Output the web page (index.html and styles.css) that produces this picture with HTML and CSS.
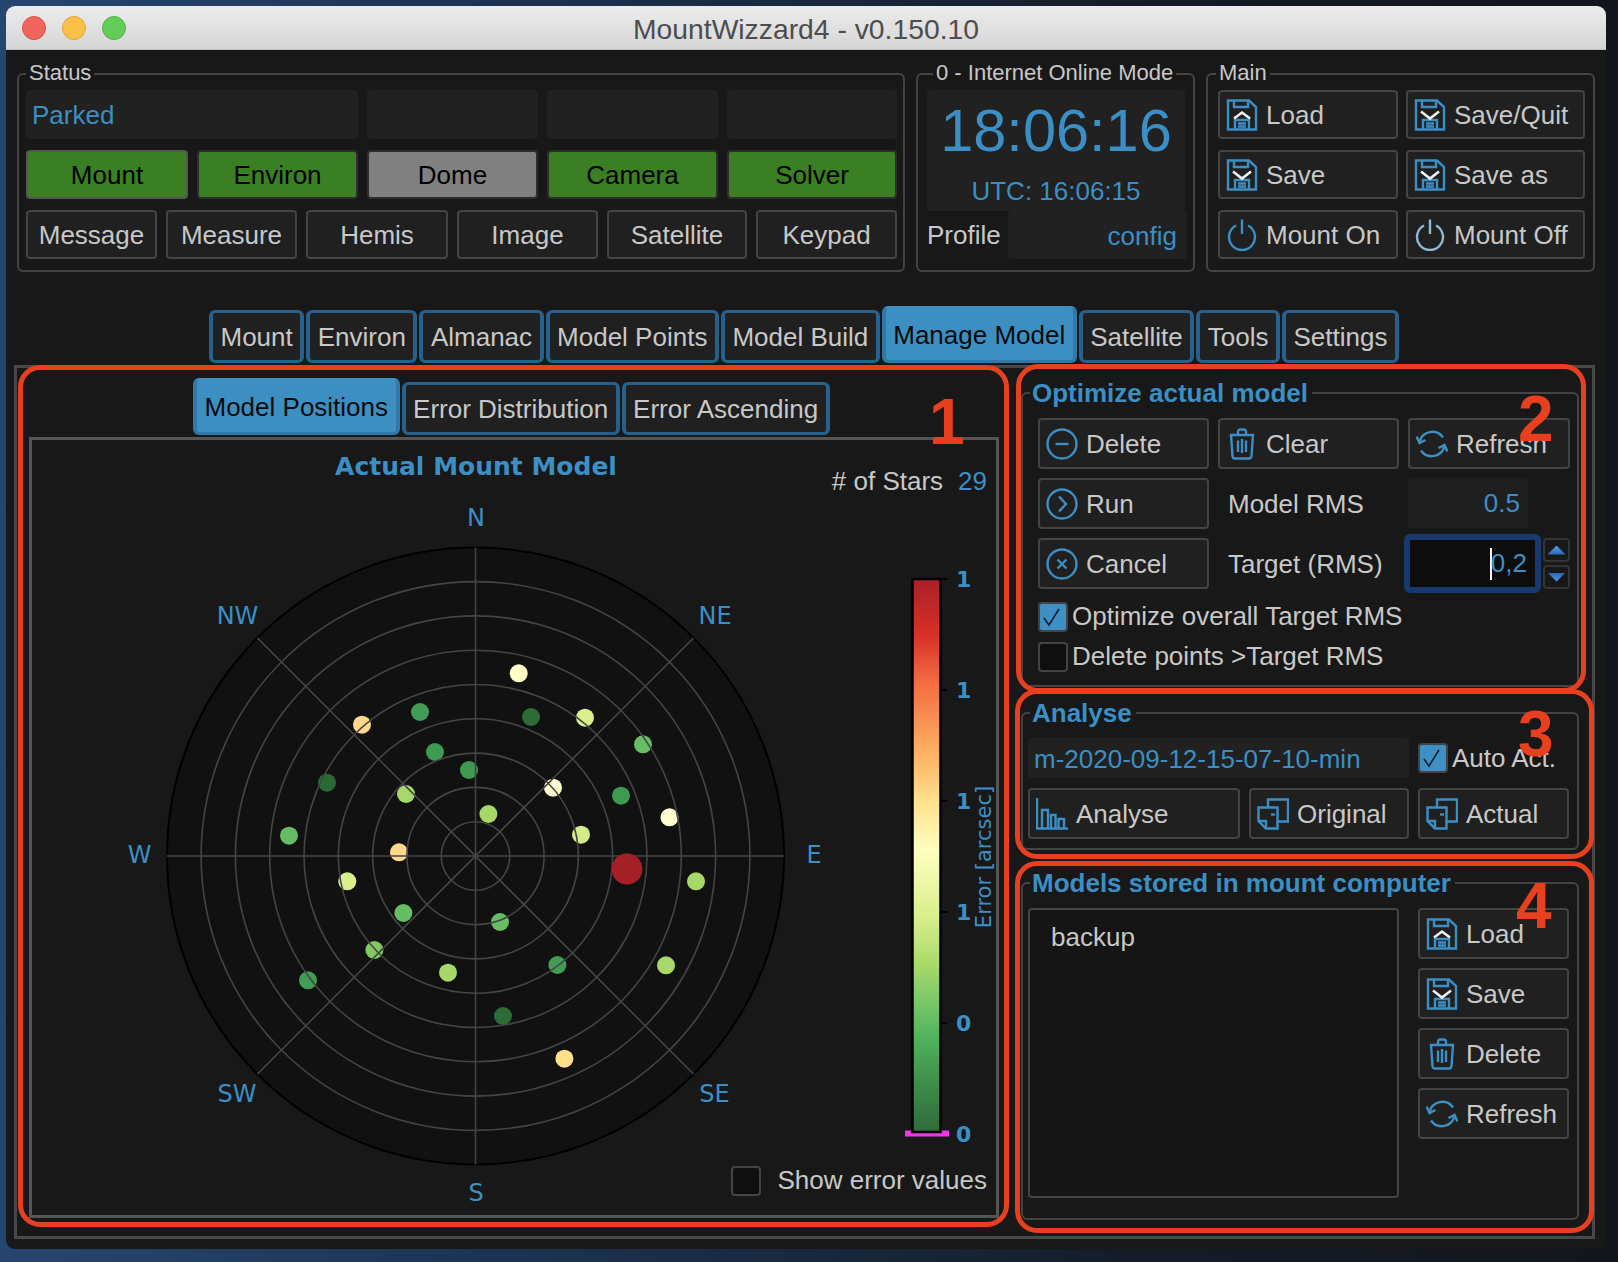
FILE: index.html
```html
<!DOCTYPE html>
<html lang="en">
<head>
  <meta charset="UTF-8">
  <title>MountWizzard4 - v0.150.10</title>
  <link rel="stylesheet" href="styles.css">
</head>
<body>
  <svg class="sprite" width="0" height="0">
    <symbol id="i-load" viewBox="0 0 32 32">
      <path d="M2 1.5H23L30 8V30.5H2Z"/><path d="M8 1.5V8H22V1.5"/>
      <path d="M9 30.5V21H23V30.5M12 24.5H20M12 27.5H20"/>
      <path class="wh" d="M8 19.5L16 13.5L24 19.5"/>
    </symbol>
    <symbol id="i-save" viewBox="0 0 32 32">
      <path d="M2 1.5H23L30 8V30.5H2Z"/><path d="M8 1.5V8H22V1.5"/>
      <path d="M9 30.5V21H23V30.5M12 24.5H20M12 27.5H20"/>
      <path class="wh" d="M7 12.5L16 19.5L25 12.5"/>
    </symbol>
    <symbol id="i-power" viewBox="0 0 32 32">
      <path d="M16 .5V15"/><path d="M10 6.5A13 13 0 1 0 22 6.5"/>
    </symbol>
    <symbol id="i-minus" viewBox="0 0 32 32">
      <circle cx="16" cy="16" r="14.5"/><path d="M9.5 16H22.5"/>
    </symbol>
    <symbol id="i-run" viewBox="0 0 32 32">
      <circle cx="16" cy="16" r="14.5"/><path d="M13 8.5L20 16L13 23.5"/>
    </symbol>
    <symbol id="i-cancel" viewBox="0 0 32 32">
      <circle cx="16" cy="16" r="14.5"/><path d="M11.5 11.5L20.5 20.5M20.5 11.5L11.5 20.5"/>
    </symbol>
    <symbol id="i-trash" viewBox="0 0 32 32">
      <path d="M5 7H27L25.5 28Q25.3 30.5 23 30.5H9Q6.7 30.5 6.5 28Z"/>
      <path d="M12 7V4Q12 1.5 14.5 1.5H17.5Q20 1.5 20 4V7"/>
      <path d="M12 12.5V24M16 11V25M20 12.5V24"/>
    </symbol>
    <symbol id="i-refresh" viewBox="0 0 32 32">
      <path d="M3.5 14.5A13 13 0 0 1 27 9.5"/><path d="M28.5 17.5A13 13 0 0 1 5 22.5"/>
      <path d="M.5 8.5L3.5 15L9.5 12"/><path d="M31.5 23.5L28.5 17L22.5 20"/>
    </symbol>
    <symbol id="i-bars" viewBox="0 0 32 32">
      <path d="M1 0V30.5H32"/><path d="M6 30V12H12V30"/><path d="M15 30V17H19.5V30"/><path d="M22.5 30V21H28V30"/>
    </symbol>
    <symbol id="i-copy" viewBox="0 0 32 32">
      <path d="M1.5 9.5H20.5V30.5H9L1.5 23Z"/><path d="M1.5 23H9V30.5"/>
      <path d="M11 9V1.5H31V23.5H20.5"/><path d="M14 16.5H18"/>
    </symbol>
  </svg>

  <div class="window">
    <header class="titlebar">
      <div class="lights"><i class="red"></i><i class="yellow"></i><i class="green"></i></div>
      <div class="title">MountWizzard4 - v0.150.10</div>
    </header>

    <div class="top-row">
      <fieldset class="box status">
        <legend>Status</legend>
        <div class="row5">
          <div class="cell wide blue">Parked</div>
          <div class="cell"></div>
          <div class="cell"></div>
          <div class="cell"></div>
        </div>
        <div class="row5">
          <button class="btn on first">Mount</button>
          <button class="btn on">Environ</button>
          <button class="btn off">Dome</button>
          <button class="btn on">Camera</button>
          <button class="btn on">Solver</button>
        </div>
        <div class="row6">
          <button class="btn">Message</button>
          <button class="btn">Measure</button>
          <button class="btn">Hemis</button>
          <button class="btn">Image</button>
          <button class="btn">Satellite</button>
          <button class="btn">Keypad</button>
        </div>
      </fieldset>

      <fieldset class="box clock">
        <legend>0 - Internet Online Mode</legend>
        <div class="clock-face">
          <div class="time">18:06:16</div>
          <div class="utc">UTC: 16:06:15</div>
        </div>
        <div class="profile">
          <span>Profile</span>
          <div class="cell blue to-right">config</div>
        </div>
      </fieldset>

      <fieldset class="box main">
        <legend>Main</legend>
        <div class="main-grid">
          <button class="btn ibtn"><svg class="ico"><use href="#i-load"/></svg>Load</button>
          <button class="btn ibtn"><svg class="ico"><use href="#i-save"/></svg>Save/Quit</button>
          <button class="btn ibtn"><svg class="ico"><use href="#i-save"/></svg>Save</button>
          <button class="btn ibtn"><svg class="ico"><use href="#i-save"/></svg>Save as</button>
          <button class="btn ibtn"><svg class="ico"><use href="#i-power"/></svg>Mount On</button>
          <button class="btn ibtn"><svg class="ico pale"><use href="#i-power"/></svg>Mount Off</button>
        </div>
      </fieldset>
    </div>

    <nav class="tabs top-tabs">
      <div class="tab">Mount</div>
      <div class="tab">Environ</div>
      <div class="tab">Almanac</div>
      <div class="tab">Model Points</div>
      <div class="tab">Model Build</div>
      <div class="tab active">Manage Model</div>
      <div class="tab">Satellite</div>
      <div class="tab">Tools</div>
      <div class="tab">Settings</div>
    </nav>

    <div class="pane">
      <section class="left">
        <nav class="tabs sub-tabs">
          <div class="tab active">Model Positions</div>
          <div class="tab">Error Distribution</div>
          <div class="tab">Error Ascending</div>
        </nav>
        <div class="plot-frame">
          <svg class="plot" width="964" height="775" viewBox="32 440 964 775">
            <defs>
              <linearGradient id="cmap" x1="0" y1="0" x2="0" y2="1">
                <stop offset="0" stop-color="#a82028"/>
                <stop offset=".1" stop-color="#d73027"/>
                <stop offset=".19" stop-color="#f46d43"/>
                <stop offset=".31" stop-color="#fdae61"/>
                <stop offset=".4" stop-color="#fee08b"/>
                <stop offset=".49" stop-color="#ffffbf"/>
                <stop offset=".61" stop-color="#d9ef8b"/>
                <stop offset=".7" stop-color="#a6d96a"/>
                <stop offset=".76" stop-color="#7cc868"/>
                <stop offset=".83" stop-color="#4fb35c"/>
                <stop offset=".92" stop-color="#3d8a4a"/>
                <stop offset="1" stop-color="#2f6b3a"/>
              </linearGradient>
            </defs>

            <text class="plot-title" x="476" y="475">Actual Mount Model</text>

            <circle class="disc" cx="475.5" cy="856" r="308.5"/>

            <g class="dots">
              <circle cx="518.7" cy="673.3" r="9" fill="#ffffc4"/>
              <circle cx="420" cy="712" r="9" fill="#429c55"/>
              <circle cx="531" cy="717" r="9" fill="#2f6b36"/>
              <circle cx="585" cy="717.7" r="9" fill="#d9ef8b"/>
              <circle cx="362" cy="724.7" r="9" fill="#fed98b"/>
              <circle cx="643" cy="744.3" r="9" fill="#66bd63"/>
              <circle cx="435" cy="752" r="9" fill="#3e9a52"/>
              <circle cx="469" cy="770" r="9" fill="#3f9a50"/>
              <circle cx="327" cy="782.7" r="9" fill="#2a6b35"/>
              <circle cx="406" cy="794" r="9" fill="#a6d96a"/>
              <circle cx="553" cy="787.7" r="9" fill="#fffed0"/>
              <circle cx="621" cy="795.7" r="9" fill="#3d9a50"/>
              <circle cx="669.5" cy="817.3" r="9" fill="#ffffd0"/>
              <circle cx="488.4" cy="814" r="9" fill="#a6d96a"/>
              <circle cx="581" cy="834.7" r="9" fill="#d3ec87"/>
              <circle cx="289" cy="835.7" r="9" fill="#66bd63"/>
              <circle cx="399" cy="852.3" r="9" fill="#fed98b"/>
              <circle cx="696" cy="881.3" r="9" fill="#a6d96a"/>
              <circle cx="347.3" cy="881.3" r="9" fill="#d9ef8b"/>
              <circle cx="403.4" cy="913" r="9" fill="#66bd63"/>
              <circle cx="500" cy="922" r="9" fill="#66bd63"/>
              <circle cx="374.4" cy="950" r="9" fill="#82c864"/>
              <circle cx="448" cy="972.7" r="9" fill="#a6d96a"/>
              <circle cx="557.4" cy="965" r="9" fill="#429c55"/>
              <circle cx="666" cy="965.3" r="9" fill="#a6d96a"/>
              <circle cx="308" cy="980.3" r="9" fill="#429c55"/>
              <circle cx="503" cy="1016" r="9" fill="#2f6b36"/>
              <circle cx="564.4" cy="1058.7" r="9" fill="#fee08b"/>
            </g>

            <g class="rings">
              <circle cx="475.5" cy="856" r="34.3"/>
              <circle cx="475.5" cy="856" r="68.6"/>
              <circle cx="475.5" cy="856" r="102.9"/>
              <circle cx="475.5" cy="856" r="137.2"/>
              <circle cx="475.5" cy="856" r="171.5"/>
              <circle cx="475.5" cy="856" r="205.8"/>
              <circle cx="475.5" cy="856" r="240.1"/>
              <circle cx="475.5" cy="856" r="274.4"/>
              <path d="M475.5 547.5V1164.5M167 856H784M257.5 638L693.5 1074M693.5 638L257.5 1074"/>
            </g>

            <circle cx="627" cy="869" r="15.5" fill="#a51f27"/>

            <g class="compass">
              <text x="476" y="526">N</text>
              <text x="237.5" y="624">NW</text>
              <text x="715" y="624">NE</text>
              <text x="139.5" y="863">W</text>
              <text x="814" y="863">E</text>
              <text x="237" y="1102">SW</text>
              <text x="714.5" y="1102">SE</text>
              <text x="476" y="1201">S</text>
            </g>

            <path class="cmark" d="M905 1133.5H949"/>
            <rect class="cbar" x="912.5" y="579" width="28" height="553"/>
            <path class="cticks" d="M941 579H947M941 690H947M941 801H947M941 912H947M941 1023H947"/>
            <g class="ctick-text">
              <text x="956" y="587">1</text>
              <text x="956" y="698">1</text>
              <text x="956" y="809">1</text>
              <text x="956" y="920">1</text>
              <text x="956" y="1031">0</text>
              <text x="956" y="1142">0</text>
            </g>
            <text class="clabel" transform="translate(991 857) rotate(-90)">Error [arcsec]</text>
          </svg>

          <div class="stars"><span>#&nbsp;of Stars</span><span class="blue">29</span></div>
          <label class="check show-err"><span class="chk narrow"></span>Show error values</label>
        </div>
      </section>

      <section class="right-col">
        <fieldset class="box grp">
          <legend>Optimize actual model</legend>
          <div class="opt-grid">
            <button class="btn ibtn"><svg class="ico"><use href="#i-minus"/></svg>Delete</button>
            <button class="btn ibtn"><svg class="ico"><use href="#i-trash"/></svg>Clear</button>
            <button class="btn ibtn"><svg class="ico"><use href="#i-refresh"/></svg>Refresh</button>
            <button class="btn ibtn"><svg class="ico"><use href="#i-run"/></svg>Run</button>
            <div class="lbl">Model RMS</div>
            <div class="cell blue to-right rms">0.5</div>
            <button class="btn ibtn"><svg class="ico"><use href="#i-cancel"/></svg>Cancel</button>
            <div class="lbl">Target (RMS)</div>
            <div class="spinbox">
              <div class="spin-input"><span class="caret"></span>0,2</div>
              <div class="spin-btns">
                <div class="spin-btn"><i class="arrow up"></i></div>
                <div class="spin-btn"><i class="arrow down"></i></div>
              </div>
            </div>
          </div>
          <label class="check opt1"><span class="chk checked"><svg width="26" height="26" viewBox="0 0 26 26"><path d="M4 14L9 21L19 5"/></svg></span>Optimize overall Target RMS</label>
          <label class="check opt2"><span class="chk"></span>Delete points &gt;Target RMS</label>
        </fieldset>

        <fieldset class="box grp analyse">
          <legend>Analyse</legend>
          <div class="ana-grid">
            <div class="cell blue path">m-2020-09-12-15-07-10-min</div>
            <label class="check"><span class="chk checked"><svg width="26" height="26" viewBox="0 0 26 26"><path d="M4 14L9 21L19 5"/></svg></span>Auto Act.</label>
            <button class="btn ibtn"><svg class="ico"><use href="#i-bars"/></svg>Analyse</button>
            <button class="btn ibtn"><svg class="ico"><use href="#i-copy"/></svg>Original</button>
            <button class="btn ibtn"><svg class="ico"><use href="#i-copy"/></svg>Actual</button>
          </div>
        </fieldset>

        <fieldset class="box grp stored">
          <legend>Models stored in mount computer</legend>
          <div class="store-row">
            <div class="list"><div class="list-item">backup</div></div>
            <div class="store-btns">
              <button class="btn ibtn"><svg class="ico"><use href="#i-load"/></svg>Load</button>
              <button class="btn ibtn"><svg class="ico"><use href="#i-save"/></svg>Save</button>
              <button class="btn ibtn"><svg class="ico"><use href="#i-trash"/></svg>Delete</button>
              <button class="btn ibtn"><svg class="ico"><use href="#i-refresh"/></svg>Refresh</button>
            </div>
          </div>
        </fieldset>
      </section>
    </div>

    <!-- annotations drawn on top of the screenshot -->
    <div class="mark m1"></div>
    <div class="mark m2"></div>
    <div class="mark m3"></div>
    <div class="mark m4"></div>
    <div class="num n1">1</div>
    <div class="num n2">2</div>
    <div class="num n3">3</div>
    <div class="num n4">4</div>
  </div>
</body>
</html>
```

FILE: styles.css
```css
html, body {
  margin: 0;
  padding: 0;
  overflow: hidden;
}
body {
  width: 1618px;
  height: 1262px;
  padding: 6px 0 0 6px;
  box-sizing: border-box;
  background:
    linear-gradient(90deg, #27466f 0, #1c3454 30%, #151c28 70%, #12161c 100%);
  font-family: "Liberation Sans", Arial, sans-serif;
  font-size: 26px;
  color: #c8c8c8;
}
.sprite {
  position: absolute;
}
.window {
  position: relative;
  width: 1600px;
  height: 1243px;
  background: #181818;
  border-radius: 9px;
  overflow: hidden;
}
.blue {
  color: #3b8fc4;
}

/* title bar */
.titlebar {
  height: 44px;
  display: flex;
  align-items: center;
  background: linear-gradient(#ececec, #d6d6d6);
  border-bottom: 1px solid #bdbdbd;
  box-sizing: border-box;
  position: relative;
}
.lights {
  display: flex;
  gap: 16px;
  padding-left: 16px;
}
.lights i {
  width: 24px;
  height: 24px;
  border-radius: 50%;
  box-sizing: border-box;
}
.lights .red { background: #f0655c; border: 1px solid #dd4f46; }
.lights .yellow { background: #f8c049; border: 1px solid #e0a535; }
.lights .green { background: #63cd57; border: 1px solid #50b445; }
.title {
  position: absolute;
  left: 0;
  right: 0;
  top: 7px;
  text-align: center;
  font-size: 28.3px;
  line-height: 32px;
  color: #4d4d4d;
}

/* group boxes */
.box {
  margin: 0;
  min-width: 0;
  box-sizing: border-box;
  border: 2px solid #444;
  border-radius: 6px;
}
.box legend {
  font-size: 22px;
  line-height: 24px;
  padding: 0 3px 2px;
  color: #c8c8c8;
}
.top-row {
  display: flex;
  gap: 11px;
  margin: 11px 0 0 11px;
}
.status {
  width: 888px;
  height: 211px;
  padding: 3px 6px 0 7px;
}
.clock {
  width: 279px;
  height: 211px;
  padding: 3px 6px 0 9px;
}
.clock legend {
  margin-left: 6px;
}
.main {
  width: 389px;
  height: 211px;
  padding: 3px 8px 0 10px;
}
.main legend {
  margin-left: -2px;
}

/* cells and buttons */
.cell {
  background: #212121;
  border-radius: 4px;
  display: flex;
  align-items: center;
  padding: 2px 5px 0 6px;
  box-sizing: border-box;
}
.cell.to-right {
  justify-content: flex-end;
  padding-right: 10px;
}
.btn {
  font: inherit;
  color: #c8c8c8;
  background: #202020;
  border: 2px solid #444;
  border-radius: 4px;
  padding: 2px 0 0;
  height: 100%;
  box-sizing: border-box;
}
.btn.on {
  background: #3a7f23;
  color: #000;
  border-color: #2e2e2e;
}
.btn.on.first {
  border-color: #555;
}
.btn.off {
  background: #808080;
  color: #000;
  border-color: #2e2e2e;
}
.ibtn {
  display: flex;
  align-items: center;
  gap: 8px;
  padding-left: 6px;
  text-align: left;
}
.ico {
  width: 32px;
  height: 32px;
  flex: none;
  fill: none;
  stroke: #3b8fc4;
  stroke-width: 2.4;
  margin-top: -2px;
}
.ico.pale {
  stroke: #8fb9d2;
}
.wh {
  stroke: #f2f2f2;
  stroke-width: 2.6;
}

.row5 {
  display: grid;
  grid-template-columns: 162px 161px 171px 171px 170px;
  column-gap: 9px;
  height: 49px;
  margin-bottom: 11px;
}
.cell.wide {
  grid-column: span 2;
}
.row6 {
  display: grid;
  grid-template-columns: 131px 131px 142px 141px 140px 141px;
  column-gap: 9px;
  height: 49px;
}

.clock-face {
  height: 121px;
  background: #212121;
  border-radius: 4px 4px 4px 0;
  text-align: center;
  color: #3b8fc4;
  width: 258px;
}
.time {
  font-size: 59.5px;
  line-height: 82px;
}
.utc {
  line-height: 38px;
}
.profile {
  display: grid;
  grid-template-columns: 81px 179px;
  height: 48px;
}
.profile span {
  align-self: center;
}

.main-grid {
  display: grid;
  grid-template-columns: 180px 179px;
  grid-auto-rows: 49px;
  gap: 11px 8px;
}

/* tab bars */
.tabs {
  display: flex;
  align-items: flex-end;
  gap: 2px;
}
.top-tabs {
  margin: 34px 0 0 203px;
  height: 57px;
}
.tab {
  height: 53px;
  line-height: 49px;
  padding: 0 7.5px;
  border: solid #27608a;
  border-width: 3px 4px;
  border-radius: 6px;
  background: #202020;
  box-sizing: border-box;
}
.tab.active {
  height: 57px;
  line-height: 53px;
  background: #3d8fc2;
  border-color: #2f78a8;
  border-top-color: #3d8fc2;
  color: #0b0b0b;
}

.pane {
  margin: 2px 0 0 8px;
  width: 1581px;
  height: 874px;
  box-sizing: border-box;
  border: 3px solid #484848;
  padding: 0 13px 0 12px;
  display: grid;
  grid-template-columns: 970px 558px;
  column-gap: 22px;
}

/* plot */
.left {
  padding-top: 10px;
}
.sub-tabs {
  margin-left: 164px;
  height: 57px;
  margin-bottom: 2px;
}
.plot-frame {
  position: relative;
  width: 970px;
  height: 781px;
  box-sizing: border-box;
  border: 3px solid #555;
}
.plot {
  display: block;
  overflow: visible;
}
.plot-title {
  font-family: "DejaVu Sans", sans-serif;
  font-weight: bold;
  font-size: 25px;
  fill: #3b8fc4;
  text-anchor: middle;
}
.disc {
  fill: #111;
  stroke: #000;
  stroke-width: 2;
}
.rings circle, .rings path {
  fill: none;
  stroke: #454545;
  stroke-width: 1.6;
}
.compass text {
  font-family: "DejaVu Sans", sans-serif;
  font-size: 24px;
  fill: #3b8fc4;
  text-anchor: middle;
}
.cbar {
  fill: url(#cmap);
  stroke: #000;
  stroke-width: 2.5;
}
.cticks {
  stroke: #000;
  stroke-width: 2;
}
.cmark {
  stroke: #f233e6;
  stroke-width: 6;
}
.ctick-text text {
  font-family: "DejaVu Sans", sans-serif;
  font-weight: bold;
  font-size: 22px;
  fill: #3b8fc4;
}
.clabel {
  font-family: "DejaVu Sans", sans-serif;
  font-size: 21px;
  fill: #3b8fc4;
  text-anchor: middle;
}
.stars {
  position: absolute;
  top: 26px;
  right: 9px;
  display: flex;
  gap: 15px;
}

/* check boxes */
.check {
  display: flex;
  align-items: center;
  gap: 4px;
}
.chk {
  width: 30px;
  height: 30px;
  box-sizing: border-box;
  border: 2px solid #444;
  border-radius: 4px;
  background: #0f0f0f;
  display: block;
  flex: none;
}
.chk.checked {
  background: #3d8fc4;
}
.chk svg {
  display: block;
  fill: none;
  stroke: #10202c;
  stroke-width: 1.6;
}
.show-err {
  position: absolute;
  top: 725px;
  right: 9px;
  gap: 16px;
}
.opt1 {
  margin: 12px 0 0 10px;
}
.opt2 {
  margin: 9px 0 13px 10px;
}

/* right column */
.right-col {
  padding-top: 10px;
}
.grp {
  width: 558px;
  padding: 0 8px 0 5px;
}
.grp legend {
  font-size: 26px;
  font-weight: bold;
  line-height: 30px;
  color: #3b8fc4;
  margin-left: 2px;
  padding: 0 4px 0 2px;
}
.grp.analyse {
  margin-top: 11px;
}
.grp.stored {
  margin-top: 18px;
}
.opt-grid {
  margin: 10px 0 0 10px;
  display: grid;
  grid-template-columns: 171px 181px 162px;
  grid-auto-rows: 51px;
  gap: 9px;
}
.lbl {
  align-self: center;
  padding: 1px 0 0 10px;
}
.cell.rms {
  width: 120px;
  height: 50px;
  background: #1f1f1f;
  padding: 0 8px 0 0;
}
.spinbox {
  display: flex;
  gap: 2px;
}
.spin-input {
  margin: -4px 0 -4px -4px;
  width: 137px;
  box-sizing: border-box;
  border: 6px solid #17396f;
  border-radius: 6px;
  background: #0d0d0d;
  color: #3b8fc4;
  display: flex;
  align-items: center;
  justify-content: flex-end;
  padding-right: 8px;
}
.caret {
  width: 2px;
  height: 32px;
  background: #f4f4f4;
  margin-right: -1px;
}
.spin-btns {
  flex: 1;
  display: flex;
  flex-direction: column;
  gap: 3px;
}
.spin-btn {
  flex: 1;
  border: 2px solid #333;
  border-radius: 4px;
  display: flex;
  align-items: center;
  justify-content: center;
}
.arrow {
  width: 18px;
  height: 9px;
}
.arrow.up {
  clip-path: polygon(50% 0, 100% 100%, 0 100%);
  background: linear-gradient(#4ea6e6, #2a63b8);
}
.arrow.down {
  clip-path: polygon(0 0, 100% 0, 50% 100%);
  background: linear-gradient(#2a63b8, #4ea6e6);
}
.ana-grid {
  margin: 10px 0 9px;
  display: grid;
  grid-template-columns: 212px 160px 151px;
  grid-template-rows: 40px 51px;
  gap: 10px 9px;
}
.cell.path {
  grid-column: span 2;
}
.store-row {
  margin: 10px 0 20px;
  display: flex;
  gap: 19px;
  align-items: flex-start;
}
.list {
  width: 371px;
  height: 290px;
  box-sizing: border-box;
  border: 2px solid #444;
  border-radius: 4px;
  background: #151515;
}
.list-item {
  padding: 12px 0 0 21px;
  line-height: 30px;
}
.store-btns {
  width: 151px;
  display: grid;
  grid-auto-rows: 51px;
  row-gap: 9px;
}

/* red annotations */
.mark {
  position: absolute;
  box-sizing: border-box;
  border: 5px solid #e8401f;
  border-radius: 22px;
}
.m1 { left: 12px; top: 359px; width: 991px; height: 862px; }
.m2 { left: 1010px; top: 358px; width: 570px; height: 329px; }
.m3 { left: 1009px; top: 683px; width: 579px; height: 170px; }
.m4 { left: 1009px; top: 855px; width: 579px; height: 372px; }
.num {
  position: absolute;
  font-weight: bold;
  font-size: 64px;
  line-height: 64px;
  color: #e8401f;
}
.n1 { left: 923px; top: 384px; }
.n2 { left: 1512px; top: 381px; }
.n3 { left: 1512px; top: 696px; }
.n4 { left: 1510px; top: 868px; }
```
